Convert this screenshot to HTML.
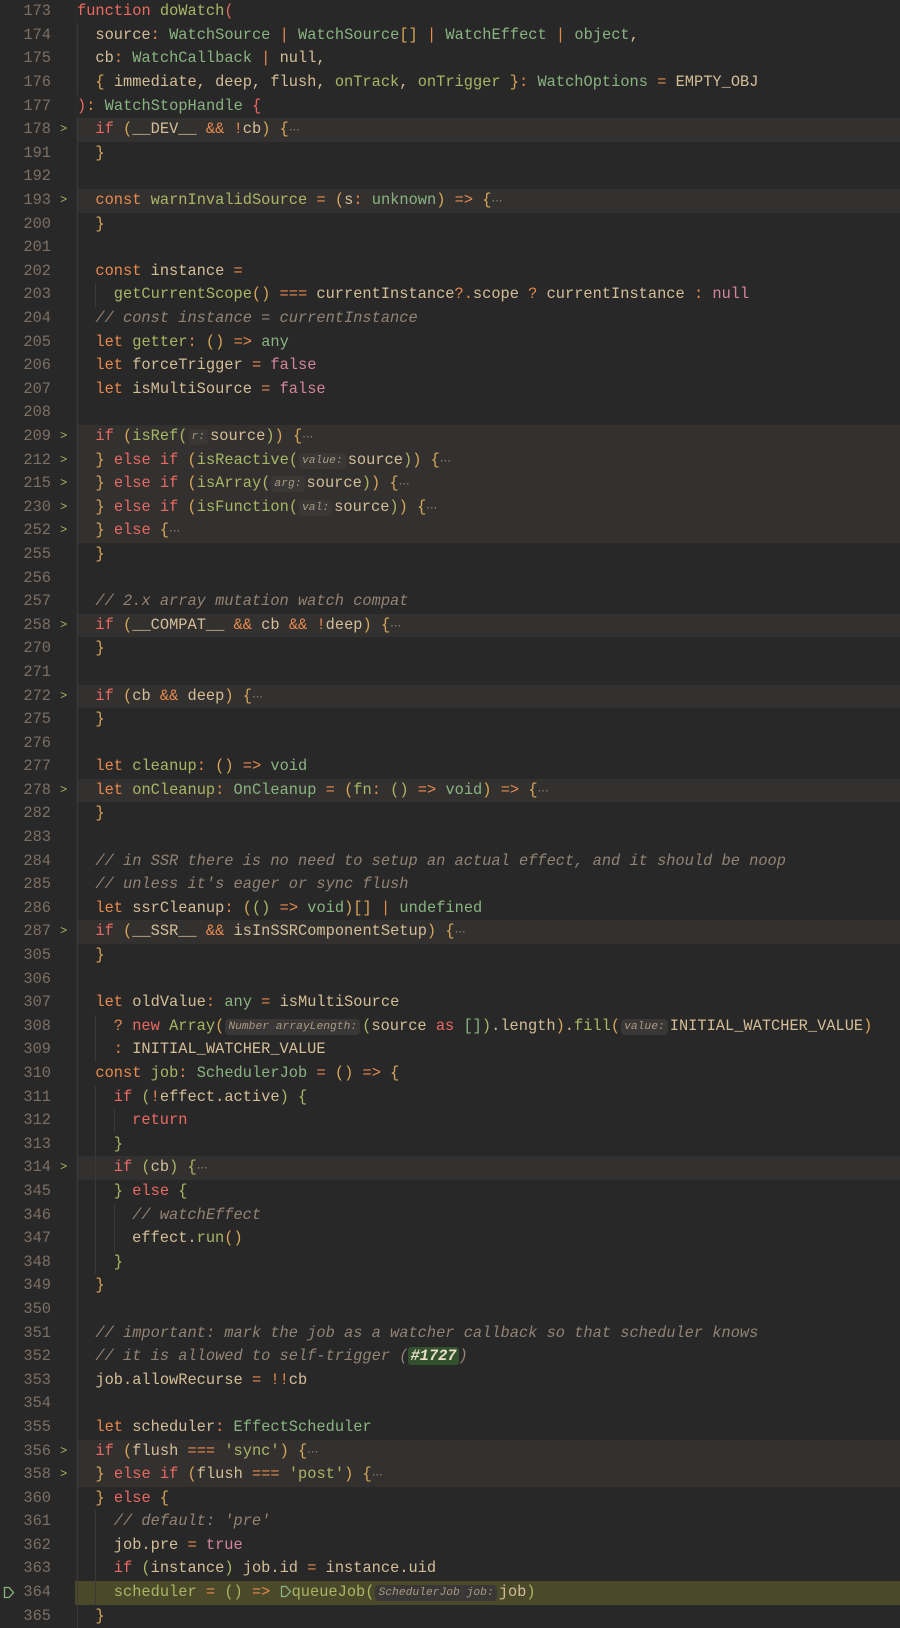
<!DOCTYPE html>
<html><head><meta charset="utf-8"><style>
body{margin:0;background:#292828;width:900px;height:1604px;overflow:hidden;font-family:"Liberation Mono",monospace;font-size:15.35px;color:#d4be98}
#w{position:absolute;top:0.3px;left:0;width:900px}
.l{position:relative;height:23.6px;line-height:23.6px;white-space:pre}
.n{position:absolute;left:0;width:51px;text-align:right;color:#7c6f64;font-size:15.35px}
.a{position:absolute;left:60px;top:0;color:#a9b665;font-size:12px}
.c0{position:absolute;left:77px;right:0;top:0;bottom:0;padding-left:0}
.h{background:#333130}
.y{background:#4a4a2a}
.g{display:inline-block;width:18.4px;box-shadow:inset 1px 0 #3c3836;height:23.6px;vertical-align:top}
.k{color:#ea6962}.o{color:#e78a4e}.f{color:#a9b665}.t{color:#89b482}.b{color:#d8a657}.p{color:#d3869b}
.c{color:#928374;font-style:italic}
.e{color:#928374;font-size:11px}
.i{display:inline-block;background:#3a3836;color:#a89984;font-style:italic;font-size:11.3px;line-height:16px;height:16px;padding:0 3px;border-radius:4px;margin:0 2px 0 1px;vertical-align:1px}
.tag{background:#34512f;color:#e8e0c8;font-weight:bold;border-radius:3px;padding:0 2px}
#gl{position:absolute;left:76px;top:0;width:1px;height:1604px;background:#2f2d2c}
</style></head><body><div id="gl"></div><div id="w">
<div class="l"><span class="n">173</span><span class="c0"><span class="k">function</span> <span class="f">doWatch</span><span class="k">(</span></span></div>
<div class="l"><span class="n">174</span><span class="c0"><span class="g"></span>source<span class="o">:</span> <span class="t">WatchSource</span> <span class="o">|</span> <span class="t">WatchSource</span><span class="b">[]</span> <span class="o">|</span> <span class="t">WatchEffect</span> <span class="o">|</span> <span class="t">object</span>,</span></div>
<div class="l"><span class="n">175</span><span class="c0"><span class="g"></span>cb<span class="o">:</span> <span class="t">WatchCallback</span> <span class="o">|</span> null,</span></div>
<div class="l"><span class="n">176</span><span class="c0"><span class="g"></span><span class="b">{</span> immediate, deep, flush, <span class="f">onTrack</span>, <span class="f">onTrigger</span> <span class="b">}</span><span class="o">:</span> <span class="t">WatchOptions</span> <span class="o">=</span> EMPTY_OBJ</span></div>
<div class="l"><span class="n">177</span><span class="c0"><span class="k">)</span><span class="o">:</span> <span class="t">WatchStopHandle</span> <span class="k">{</span></span></div>
<div class="l"><span class="n">178</span><span class="a">&gt;</span><span class="c0 h"><span class="g"></span><span class="k">if</span> <span class="b">(</span>__DEV__ <span class="o">&amp;&amp;</span> <span class="o">!</span>cb<span class="b">)</span> <span class="b">{</span><span class="e">⋯</span></span></div>
<div class="l"><span class="n">191</span><span class="c0"><span class="g"></span><span class="b">}</span></span></div>
<div class="l"><span class="n">192</span><span class="c0"><span class="g"></span></span></div>
<div class="l"><span class="n">193</span><span class="a">&gt;</span><span class="c0 h"><span class="g"></span><span class="o">const</span> <span class="f">warnInvalidSource</span> <span class="o">=</span> <span class="b">(</span>s<span class="o">:</span> <span class="t">unknown</span><span class="b">)</span> <span class="o">=&gt;</span> <span class="b">{</span><span class="e">⋯</span></span></div>
<div class="l"><span class="n">200</span><span class="c0"><span class="g"></span><span class="b">}</span></span></div>
<div class="l"><span class="n">201</span><span class="c0"><span class="g"></span></span></div>
<div class="l"><span class="n">202</span><span class="c0"><span class="g"></span><span class="o">const</span> instance <span class="o">=</span></span></div>
<div class="l"><span class="n">203</span><span class="c0"><span class="g"></span><span class="g"></span><span class="f">getCurrentScope</span><span class="b">()</span> <span class="o">===</span> currentInstance<span class="o">?.</span>scope <span class="o">?</span> currentInstance <span class="o">:</span> <span class="p">null</span></span></div>
<div class="l"><span class="n">204</span><span class="c0"><span class="g"></span><span class="c">// const instance = currentInstance</span></span></div>
<div class="l"><span class="n">205</span><span class="c0"><span class="g"></span><span class="o">let</span> <span class="f">getter</span><span class="o">:</span> <span class="b">()</span> <span class="o">=&gt;</span> <span class="t">any</span></span></div>
<div class="l"><span class="n">206</span><span class="c0"><span class="g"></span><span class="o">let</span> forceTrigger <span class="o">=</span> <span class="p">false</span></span></div>
<div class="l"><span class="n">207</span><span class="c0"><span class="g"></span><span class="o">let</span> isMultiSource <span class="o">=</span> <span class="p">false</span></span></div>
<div class="l"><span class="n">208</span><span class="c0"><span class="g"></span></span></div>
<div class="l"><span class="n">209</span><span class="a">&gt;</span><span class="c0 h"><span class="g"></span><span class="k">if</span> <span class="b">(</span><span class="f">isRef</span><span class="f">(</span><span class="i">r:</span>source<span class="f">)</span><span class="b">)</span> <span class="b">{</span><span class="e">⋯</span></span></div>
<div class="l"><span class="n">212</span><span class="a">&gt;</span><span class="c0 h"><span class="g"></span><span class="b">}</span> <span class="k">else if</span> <span class="b">(</span><span class="f">isReactive</span><span class="f">(</span><span class="i">value:</span>source<span class="f">)</span><span class="b">)</span> <span class="b">{</span><span class="e">⋯</span></span></div>
<div class="l"><span class="n">215</span><span class="a">&gt;</span><span class="c0 h"><span class="g"></span><span class="b">}</span> <span class="k">else if</span> <span class="b">(</span><span class="f">isArray</span><span class="f">(</span><span class="i">arg:</span>source<span class="f">)</span><span class="b">)</span> <span class="b">{</span><span class="e">⋯</span></span></div>
<div class="l"><span class="n">230</span><span class="a">&gt;</span><span class="c0 h"><span class="g"></span><span class="b">}</span> <span class="k">else if</span> <span class="b">(</span><span class="f">isFunction</span><span class="f">(</span><span class="i">val:</span>source<span class="f">)</span><span class="b">)</span> <span class="b">{</span><span class="e">⋯</span></span></div>
<div class="l"><span class="n">252</span><span class="a">&gt;</span><span class="c0 h"><span class="g"></span><span class="b">}</span> <span class="k">else</span> <span class="b">{</span><span class="e">⋯</span></span></div>
<div class="l"><span class="n">255</span><span class="c0"><span class="g"></span><span class="b">}</span></span></div>
<div class="l"><span class="n">256</span><span class="c0"><span class="g"></span></span></div>
<div class="l"><span class="n">257</span><span class="c0"><span class="g"></span><span class="c">// 2.x array mutation watch compat</span></span></div>
<div class="l"><span class="n">258</span><span class="a">&gt;</span><span class="c0 h"><span class="g"></span><span class="k">if</span> <span class="b">(</span>__COMPAT__ <span class="o">&amp;&amp;</span> cb <span class="o">&amp;&amp;</span> <span class="o">!</span>deep<span class="b">)</span> <span class="b">{</span><span class="e">⋯</span></span></div>
<div class="l"><span class="n">270</span><span class="c0"><span class="g"></span><span class="b">}</span></span></div>
<div class="l"><span class="n">271</span><span class="c0"><span class="g"></span></span></div>
<div class="l"><span class="n">272</span><span class="a">&gt;</span><span class="c0 h"><span class="g"></span><span class="k">if</span> <span class="b">(</span>cb <span class="o">&amp;&amp;</span> deep<span class="b">)</span> <span class="b">{</span><span class="e">⋯</span></span></div>
<div class="l"><span class="n">275</span><span class="c0"><span class="g"></span><span class="b">}</span></span></div>
<div class="l"><span class="n">276</span><span class="c0"><span class="g"></span></span></div>
<div class="l"><span class="n">277</span><span class="c0"><span class="g"></span><span class="o">let</span> <span class="f">cleanup</span><span class="o">:</span> <span class="b">()</span> <span class="o">=&gt;</span> <span class="t">void</span></span></div>
<div class="l"><span class="n">278</span><span class="a">&gt;</span><span class="c0 h"><span class="g"></span><span class="o">let</span> <span class="f">onCleanup</span><span class="o">:</span> <span class="t">OnCleanup</span> <span class="o">=</span> <span class="b">(</span><span class="f">fn</span><span class="o">:</span> <span class="f">()</span> <span class="o">=&gt;</span> <span class="t">void</span><span class="b">)</span> <span class="o">=&gt;</span> <span class="b">{</span><span class="e">⋯</span></span></div>
<div class="l"><span class="n">282</span><span class="c0"><span class="g"></span><span class="b">}</span></span></div>
<div class="l"><span class="n">283</span><span class="c0"><span class="g"></span></span></div>
<div class="l"><span class="n">284</span><span class="c0"><span class="g"></span><span class="c">// in SSR there is no need to setup an actual effect, and it should be noop</span></span></div>
<div class="l"><span class="n">285</span><span class="c0"><span class="g"></span><span class="c">// unless it's eager or sync flush</span></span></div>
<div class="l"><span class="n">286</span><span class="c0"><span class="g"></span><span class="o">let</span> ssrCleanup<span class="o">:</span> <span class="b">(</span><span class="f">()</span> <span class="o">=&gt;</span> <span class="t">void</span><span class="b">)[]</span> <span class="o">|</span> <span class="t">undefined</span></span></div>
<div class="l"><span class="n">287</span><span class="a">&gt;</span><span class="c0 h"><span class="g"></span><span class="k">if</span> <span class="b">(</span>__SSR__ <span class="o">&amp;&amp;</span> isInSSRComponentSetup<span class="b">)</span> <span class="b">{</span><span class="e">⋯</span></span></div>
<div class="l"><span class="n">305</span><span class="c0"><span class="g"></span><span class="b">}</span></span></div>
<div class="l"><span class="n">306</span><span class="c0"><span class="g"></span></span></div>
<div class="l"><span class="n">307</span><span class="c0"><span class="g"></span><span class="o">let</span> oldValue<span class="o">:</span> <span class="t">any</span> <span class="o">=</span> isMultiSource</span></div>
<div class="l"><span class="n">308</span><span class="c0"><span class="g"></span><span class="g"></span><span class="o">?</span> <span class="k">new</span> <span class="f">Array</span><span class="b">(</span><span class="i">Number arrayLength:</span><span class="f">(</span>source <span class="k">as</span> <span class="t">[]</span><span class="f">)</span>.length<span class="b">)</span>.<span class="f">fill</span><span class="b">(</span><span class="i">value:</span>INITIAL_WATCHER_VALUE<span class="b">)</span></span></div>
<div class="l"><span class="n">309</span><span class="c0"><span class="g"></span><span class="g"></span><span class="o">:</span> INITIAL_WATCHER_VALUE</span></div>
<div class="l"><span class="n">310</span><span class="c0"><span class="g"></span><span class="o">const</span> <span class="f">job</span><span class="o">:</span> <span class="t">SchedulerJob</span> <span class="o">=</span> <span class="b">()</span> <span class="o">=&gt;</span> <span class="b">{</span></span></div>
<div class="l"><span class="n">311</span><span class="c0"><span class="g"></span><span class="g"></span><span class="k">if</span> <span class="f">(</span><span class="o">!</span>effect.active<span class="f">)</span> <span class="f">{</span></span></div>
<div class="l"><span class="n">312</span><span class="c0"><span class="g"></span><span class="g"></span><span class="g"></span><span class="k">return</span></span></div>
<div class="l"><span class="n">313</span><span class="c0"><span class="g"></span><span class="g"></span><span class="f">}</span></span></div>
<div class="l"><span class="n">314</span><span class="a">&gt;</span><span class="c0 h"><span class="g"></span><span class="g"></span><span class="k">if</span> <span class="f">(</span>cb<span class="f">)</span> <span class="f">{</span><span class="e">⋯</span></span></div>
<div class="l"><span class="n">345</span><span class="c0"><span class="g"></span><span class="g"></span><span class="f">}</span> <span class="k">else</span> <span class="f">{</span></span></div>
<div class="l"><span class="n">346</span><span class="c0"><span class="g"></span><span class="g"></span><span class="g"></span><span class="c">// watchEffect</span></span></div>
<div class="l"><span class="n">347</span><span class="c0"><span class="g"></span><span class="g"></span><span class="g"></span>effect.<span class="f">run</span><span class="b">()</span></span></div>
<div class="l"><span class="n">348</span><span class="c0"><span class="g"></span><span class="g"></span><span class="f">}</span></span></div>
<div class="l"><span class="n">349</span><span class="c0"><span class="g"></span><span class="b">}</span></span></div>
<div class="l"><span class="n">350</span><span class="c0"><span class="g"></span></span></div>
<div class="l"><span class="n">351</span><span class="c0"><span class="g"></span><span class="c">// important: mark the job as a watcher callback so that scheduler knows</span></span></div>
<div class="l"><span class="n">352</span><span class="c0"><span class="g"></span><span class="c">// it is allowed to self-trigger (<span class="tag">#1727</span>)</span></span></div>
<div class="l"><span class="n">353</span><span class="c0"><span class="g"></span>job.allowRecurse <span class="o">=</span> <span class="o">!!</span>cb</span></div>
<div class="l"><span class="n">354</span><span class="c0"><span class="g"></span></span></div>
<div class="l"><span class="n">355</span><span class="c0"><span class="g"></span><span class="o">let</span> scheduler<span class="o">:</span> <span class="t">EffectScheduler</span></span></div>
<div class="l"><span class="n">356</span><span class="a">&gt;</span><span class="c0 h"><span class="g"></span><span class="k">if</span> <span class="b">(</span>flush <span class="o">===</span> <span class="f">'sync'</span><span class="b">)</span> <span class="b">{</span><span class="e">⋯</span></span></div>
<div class="l"><span class="n">358</span><span class="a">&gt;</span><span class="c0 h"><span class="g"></span><span class="b">}</span> <span class="k">else if</span> <span class="b">(</span>flush <span class="o">===</span> <span class="f">'post'</span><span class="b">)</span> <span class="b">{</span><span class="e">⋯</span></span></div>
<div class="l"><span class="n">360</span><span class="c0"><span class="g"></span><span class="b">}</span> <span class="k">else</span> <span class="b">{</span></span></div>
<div class="l"><span class="n">361</span><span class="c0"><span class="g"></span><span class="g"></span><span class="c">// default: 'pre'</span></span></div>
<div class="l"><span class="n">362</span><span class="c0"><span class="g"></span><span class="g"></span>job.pre <span class="o">=</span> <span class="p">true</span></span></div>
<div class="l"><span class="n">363</span><span class="c0"><span class="g"></span><span class="g"></span><span class="k">if</span> <span class="f">(</span>instance<span class="f">)</span> job.id <span class="o">=</span> instance.uid</span></div>
<div class="l"><svg style="position:absolute;left:3px;top:5px" width="12" height="13" viewBox="0 0 12 13"><path d="M1.5 1.5h4.5l4.5 5-4.5 5h-4.5z" fill="none" stroke="#89b482" stroke-width="1.3"/></svg><span class="n">364</span><span class="c0 y" style="left:75px;padding-left:2px"><span class="g"></span><span class="g"></span><span class="f">scheduler</span> <span class="o">=</span> <span class="f">()</span> <span class="o">=&gt;</span> <svg width="12" height="13" viewBox="0 0 12 13" style="vertical-align:-2px"><path d="M1.5 1.5h4.5l4.5 5-4.5 5h-4.5z" fill="none" stroke="#89b482" stroke-width="1.3"/></svg><span class="f">queueJob</span><span class="f">(</span><span class="i">SchedulerJob job:</span>job<span class="f">)</span></span></div>
<div class="l"><span class="n">365</span><span class="c0"><span class="g"></span><span class="b">}</span></span></div>
</div></body></html>
